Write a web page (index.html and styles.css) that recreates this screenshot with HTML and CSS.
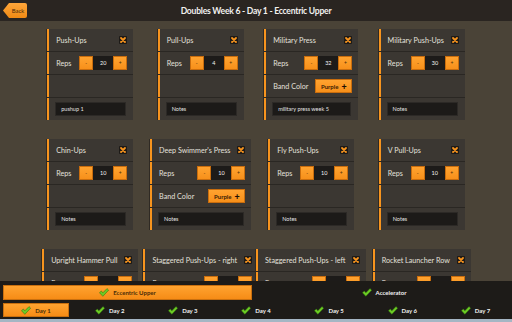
FILE: index.html
```html
<!DOCTYPE html>
<html>
<head>
<meta charset="utf-8">
<link rel="stylesheet" href="styles.css">
</head>
<body>
<div class="app">
  <header class="topbar">
    <div class="left"><button class="back">Back</button></div>
    <h1 class="title">Doubles Week 6 - Day 1 - Eccentric Upper</h1>
    <div class="right"></div>
  </header>

  <main class="board">
    <div class="grid">
      <!-- row 1 -->
      <div class="card">
        <div class="row head"><span class="name">Push-Ups</span><span class="close"><svg viewBox="0 0 8 8"><rect width="8" height="8" rx="1" fill="#1d1a17"/><path d="M2 2L6 6M6 2L2 6" stroke="#f7941e" stroke-width="1.8" stroke-linecap="round"/></svg></span></div>
        <div class="row"><span class="label">Reps</span><div class="stepper"><span class="sbtn">-</span><span class="val">20</span><span class="sbtn">+</span></div></div>
        <div class="row"></div>
        <div class="row"><div class="note">pushup 1</div></div>
      </div>
      <div class="card">
        <div class="row head"><span class="name">Pull-Ups</span><span class="close"><svg viewBox="0 0 8 8"><rect width="8" height="8" rx="1" fill="#1d1a17"/><path d="M2 2L6 6M6 2L2 6" stroke="#f7941e" stroke-width="1.8" stroke-linecap="round"/></svg></span></div>
        <div class="row"><span class="label">Reps</span><div class="stepper"><span class="sbtn">-</span><span class="val">4</span><span class="sbtn">+</span></div></div>
        <div class="row"></div>
        <div class="row"><div class="note">Notes</div></div>
      </div>
      <div class="card">
        <div class="row head"><span class="name">Military Press</span><span class="close"><svg viewBox="0 0 8 8"><rect width="8" height="8" rx="1" fill="#1d1a17"/><path d="M2 2L6 6M6 2L2 6" stroke="#f7941e" stroke-width="1.8" stroke-linecap="round"/></svg></span></div>
        <div class="row"><span class="label">Reps</span><div class="stepper"><span class="sbtn">-</span><span class="val">32</span><span class="sbtn">+</span></div></div>
        <div class="row"><span class="label">Band Color</span><span class="band">Purple<b>+</b></span></div>
        <div class="row"><div class="note">military press week 5</div></div>
      </div>
      <div class="card">
        <div class="row head"><span class="name">Military Push-Ups</span><span class="close"><svg viewBox="0 0 8 8"><rect width="8" height="8" rx="1" fill="#1d1a17"/><path d="M2 2L6 6M6 2L2 6" stroke="#f7941e" stroke-width="1.8" stroke-linecap="round"/></svg></span></div>
        <div class="row"><span class="label">Reps</span><div class="stepper"><span class="sbtn">-</span><span class="val">30</span><span class="sbtn">+</span></div></div>
        <div class="row"></div>
        <div class="row"><div class="note">Notes</div></div>
      </div>

      <!-- row 2 -->
      <div class="card">
        <div class="row head"><span class="name">Chin-Ups</span><span class="close"><svg viewBox="0 0 8 8"><rect width="8" height="8" rx="1" fill="#1d1a17"/><path d="M2 2L6 6M6 2L2 6" stroke="#f7941e" stroke-width="1.8" stroke-linecap="round"/></svg></span></div>
        <div class="row"><span class="label">Reps</span><div class="stepper"><span class="sbtn">-</span><span class="val">10</span><span class="sbtn">+</span></div></div>
        <div class="row"></div>
        <div class="row"><div class="note">Notes</div></div>
      </div>
      <div class="card">
        <div class="row head"><span class="name">Deep Swimmer's Press</span><span class="close"><svg viewBox="0 0 8 8"><rect width="8" height="8" rx="1" fill="#1d1a17"/><path d="M2 2L6 6M6 2L2 6" stroke="#f7941e" stroke-width="1.8" stroke-linecap="round"/></svg></span></div>
        <div class="row"><span class="label">Reps</span><div class="stepper"><span class="sbtn">-</span><span class="val">10</span><span class="sbtn">+</span></div></div>
        <div class="row"><span class="label">Band Color</span><span class="band">Purple<b>+</b></span></div>
        <div class="row"><div class="note">Notes</div></div>
      </div>
      <div class="card">
        <div class="row head"><span class="name">Fly Push-Ups</span><span class="close"><svg viewBox="0 0 8 8"><rect width="8" height="8" rx="1" fill="#1d1a17"/><path d="M2 2L6 6M6 2L2 6" stroke="#f7941e" stroke-width="1.8" stroke-linecap="round"/></svg></span></div>
        <div class="row"><span class="label">Reps</span><div class="stepper"><span class="sbtn">-</span><span class="val">10</span><span class="sbtn">+</span></div></div>
        <div class="row"></div>
        <div class="row"><div class="note">Notes</div></div>
      </div>
      <div class="card">
        <div class="row head"><span class="name">V Pull-Ups</span><span class="close"><svg viewBox="0 0 8 8"><rect width="8" height="8" rx="1" fill="#1d1a17"/><path d="M2 2L6 6M6 2L2 6" stroke="#f7941e" stroke-width="1.8" stroke-linecap="round"/></svg></span></div>
        <div class="row"><span class="label">Reps</span><div class="stepper"><span class="sbtn">-</span><span class="val">10</span><span class="sbtn">+</span></div></div>
        <div class="row"></div>
        <div class="row"><div class="note">Notes</div></div>
      </div>

      <!-- row 3 -->
      <div class="card">
        <div class="row head"><span class="name">Upright Hammer Pull</span><span class="close"><svg viewBox="0 0 8 8"><rect width="8" height="8" rx="1" fill="#1d1a17"/><path d="M2 2L6 6M6 2L2 6" stroke="#f7941e" stroke-width="1.8" stroke-linecap="round"/></svg></span></div>
        <div class="row"><span class="label">Reps</span><div class="stepper"><span class="sbtn">-</span><span class="val">10</span><span class="sbtn">+</span></div></div>
        <div class="row"></div>
        <div class="row"><div class="note">Notes</div></div>
      </div>
      <div class="card">
        <div class="row head"><span class="name">Staggered Push-Ups - right</span><span class="close"><svg viewBox="0 0 8 8"><rect width="8" height="8" rx="1" fill="#1d1a17"/><path d="M2 2L6 6M6 2L2 6" stroke="#f7941e" stroke-width="1.8" stroke-linecap="round"/></svg></span></div>
        <div class="row"><span class="label">Reps</span><div class="stepper"><span class="sbtn">-</span><span class="val">10</span><span class="sbtn">+</span></div></div>
        <div class="row"></div>
        <div class="row"><div class="note">Notes</div></div>
      </div>
      <div class="card">
        <div class="row head"><span class="name">Staggered Push-Ups - left</span><span class="close"><svg viewBox="0 0 8 8"><rect width="8" height="8" rx="1" fill="#1d1a17"/><path d="M2 2L6 6M6 2L2 6" stroke="#f7941e" stroke-width="1.8" stroke-linecap="round"/></svg></span></div>
        <div class="row"><span class="label">Reps</span><div class="stepper"><span class="sbtn">-</span><span class="val">10</span><span class="sbtn">+</span></div></div>
        <div class="row"></div>
        <div class="row"><div class="note">Notes</div></div>
      </div>
      <div class="card">
        <div class="row head"><span class="name">Rocket Launcher Row</span><span class="close"><svg viewBox="0 0 8 8"><rect width="8" height="8" rx="1" fill="#1d1a17"/><path d="M2 2L6 6M6 2L2 6" stroke="#f7941e" stroke-width="1.8" stroke-linecap="round"/></svg></span></div>
        <div class="row"><span class="label">Reps</span><div class="stepper"><span class="sbtn">-</span><span class="val">10</span><span class="sbtn">+</span></div></div>
        <div class="row"></div>
        <div class="row"><div class="note">Notes</div></div>
      </div>
    </div>
  </main>

  <footer class="tabbar">
    <div class="phases">
      <div class="cell"><div class="tab active"><svg class="check" viewBox="0 0 12 10"><polygon points="0.5,5.2 2.8,3.2 4.6,5.4 9.6,0.3 11.6,2.2 4.6,9.6" fill="#6ccb24" stroke="#2f6d0e" stroke-width="0.6" stroke-linejoin="round"/></svg><span>Eccentric Upper</span></div></div>
      <div class="cell"><div class="tab"><svg class="check" viewBox="0 0 12 10"><polygon points="0.5,5.2 2.8,3.2 4.6,5.4 9.6,0.3 11.6,2.2 4.6,9.6" fill="#6ccb24" stroke="#2f6d0e" stroke-width="0.6" stroke-linejoin="round"/></svg><span>Accelerator</span></div></div>
    </div>
    <div class="days">
      <div class="cell"><div class="tab active"><svg class="check" viewBox="0 0 12 10"><polygon points="0.5,5.2 2.8,3.2 4.6,5.4 9.6,0.3 11.6,2.2 4.6,9.6" fill="#6ccb24" stroke="#2f6d0e" stroke-width="0.6" stroke-linejoin="round"/></svg><span>Day 1</span></div></div>
      <div class="cell"><div class="tab"><svg class="check" viewBox="0 0 12 10"><polygon points="0.5,5.2 2.8,3.2 4.6,5.4 9.6,0.3 11.6,2.2 4.6,9.6" fill="#6ccb24" stroke="#2f6d0e" stroke-width="0.6" stroke-linejoin="round"/></svg><span>Day 2</span></div></div>
      <div class="cell"><div class="tab"><svg class="check" viewBox="0 0 12 10"><polygon points="0.5,5.2 2.8,3.2 4.6,5.4 9.6,0.3 11.6,2.2 4.6,9.6" fill="#6ccb24" stroke="#2f6d0e" stroke-width="0.6" stroke-linejoin="round"/></svg><span>Day 3</span></div></div>
      <div class="cell"><div class="tab"><svg class="check" viewBox="0 0 12 10"><polygon points="0.5,5.2 2.8,3.2 4.6,5.4 9.6,0.3 11.6,2.2 4.6,9.6" fill="#6ccb24" stroke="#2f6d0e" stroke-width="0.6" stroke-linejoin="round"/></svg><span>Day 4</span></div></div>
      <div class="cell"><div class="tab"><svg class="check" viewBox="0 0 12 10"><polygon points="0.5,5.2 2.8,3.2 4.6,5.4 9.6,0.3 11.6,2.2 4.6,9.6" fill="#6ccb24" stroke="#2f6d0e" stroke-width="0.6" stroke-linejoin="round"/></svg><span>Day 5</span></div></div>
      <div class="cell"><div class="tab"><svg class="check" viewBox="0 0 12 10"><polygon points="0.5,5.2 2.8,3.2 4.6,5.4 9.6,0.3 11.6,2.2 4.6,9.6" fill="#6ccb24" stroke="#2f6d0e" stroke-width="0.6" stroke-linejoin="round"/></svg><span>Day 6</span></div></div>
      <div class="cell"><div class="tab"><svg class="check" viewBox="0 0 12 10"><polygon points="0.5,5.2 2.8,3.2 4.6,5.4 9.6,0.3 11.6,2.2 4.6,9.6" fill="#6ccb24" stroke="#2f6d0e" stroke-width="0.6" stroke-linejoin="round"/></svg><span>Day 7</span></div></div>
    </div>
    <div class="strip"></div>
  </footer>
</div>
</body>
</html>
```

FILE: styles.css
```css
* { box-sizing: border-box; }
html, body { margin: 0; padding: 0; }
body {
  width: 512px;
  height: 322px;
  overflow: hidden;
  background: #4a4337;
  font-family: Lato, "Open Sans", sans-serif;
  color: #e6e3de;
}
.app {
  display: flex;
  flex-direction: column;
  height: 322px;
}

/* header */
.topbar {
  height: 21px;
  flex: none;
  background: #2a2521;
  display: grid;
  grid-template-columns: 1fr auto 1fr;
  align-items: center;
}
.left { display: flex; align-items: center; padding-left: 3px; }
.back {
  width: 24px;
  height: 15px;
  border: 0;
  padding: 0 0 0 6px;
  margin: 0;
  background: linear-gradient(#ffa63a, #f08a14);
  color: #4a2b06;
  font-family: Lato, sans-serif;
  font-size: 6px;
  clip-path: polygon(6px 0, 100% 0, 100% 100%, 6px 100%, 0 50%);
  border-radius: 0 2px 2px 0;
  text-align: center;
}
.title {
  margin: 0;
  font-size: 8.6px;
  font-weight: 700;
  letter-spacing: -0.25px;
  color: #f1f0ee;
  white-space: nowrap;
}

/* board */
.board {
  flex: 1;
  overflow: hidden;
}
.grid {
  display: grid;
  grid-template-columns: repeat(4, 1fr);
  padding: 8px 35px 0;
  row-gap: 19px;
  justify-items: center;
  align-items: start;
}
.card {
  min-width: 86px;
  display: flex;
  flex-direction: column;
  gap: 1px;
  background: #2a2723;
  box-shadow: -1px 0 0 #2f2a24;
}
.row {
  height: 22px;
  background: #3b3732;
  border-left: 2px solid #f7941e;
  padding: 0 6px 0 7px;
  display: flex;
  align-items: center;
  justify-content: space-between;
  gap: 7px;
  white-space: nowrap;
}
.name, .label {
  font-size: 7.2px;
  color: #e4e1dc;
}
.close { width: 8px; height: 8px; display: block; flex: none; }
.close svg { display: block; width: 8px; height: 8px; }

.stepper { display: flex; height: 14px; flex: none; }
.sbtn {
  width: 14px;
  height: 14px;
  background: linear-gradient(#ffa330, #f7901a);
  border: 1px solid #c96d0d;
  color: #4a2b06;
  font-size: 5px;
  display: flex;
  align-items: center;
  justify-content: center;
}
.val {
  width: 20px;
  height: 14px;
  background: #1d1b19;
  color: #f2f2f2;
  font-size: 5.5px;
  display: flex;
  align-items: center;
  justify-content: center;
}
.band {
  width: 37px;
  height: 14px;
  flex: none;
  background: linear-gradient(#ffa330, #f7901a);
  border: 1px solid #c96d0d;
  color: #3a2205;
  font-size: 6px;
  font-weight: 700;
  display: flex;
  align-items: center;
  justify-content: center;
  gap: 3px;
}
.band b { font-size: 9px; color: #1a1005; line-height: 1; }
.note {
  width: 100%;
  margin-left: -1px;
  height: 14px;
  background: #1c1a18;
  border: 1px solid #2c2926;
  color: #e2e2e2;
  font-size: 5.5px;
  display: flex;
  align-items: center;
  padding-left: 5px;
}

/* footer tabs */
.tabbar {
  flex: none;
  height: 41px;
  background: #1d1b18;
  padding-top: 4px;
  display: flex;
  flex-direction: column;
}
.phases {
  display: grid;
  grid-template-columns: 1fr 1fr;
  height: 15px;
}
.days {
  display: grid;
  grid-template-columns: repeat(7, 1fr);
  height: 14px;
  margin-top: 3px;
}
.cell { display: flex; justify-content: center; }
.tab {
  display: flex;
  align-items: center;
  justify-content: center;
  gap: 4px;
  height: 100%;
  font-size: 6px;
  font-weight: 700;
  color: #f2f2f2;
}
.tab.active {
  width: 100%;
  margin: 0 4px 0 3px;
  background: linear-gradient(#ffa330, #f68c16);
  border: 1px solid #c9700f;
  color: #4a2c08;
}
.check { width: 10px; height: 9px; display: block; flex: none; }
.strip {
  margin-top: auto;
  height: 3px;
  background: #a5b6c4;
}
```
